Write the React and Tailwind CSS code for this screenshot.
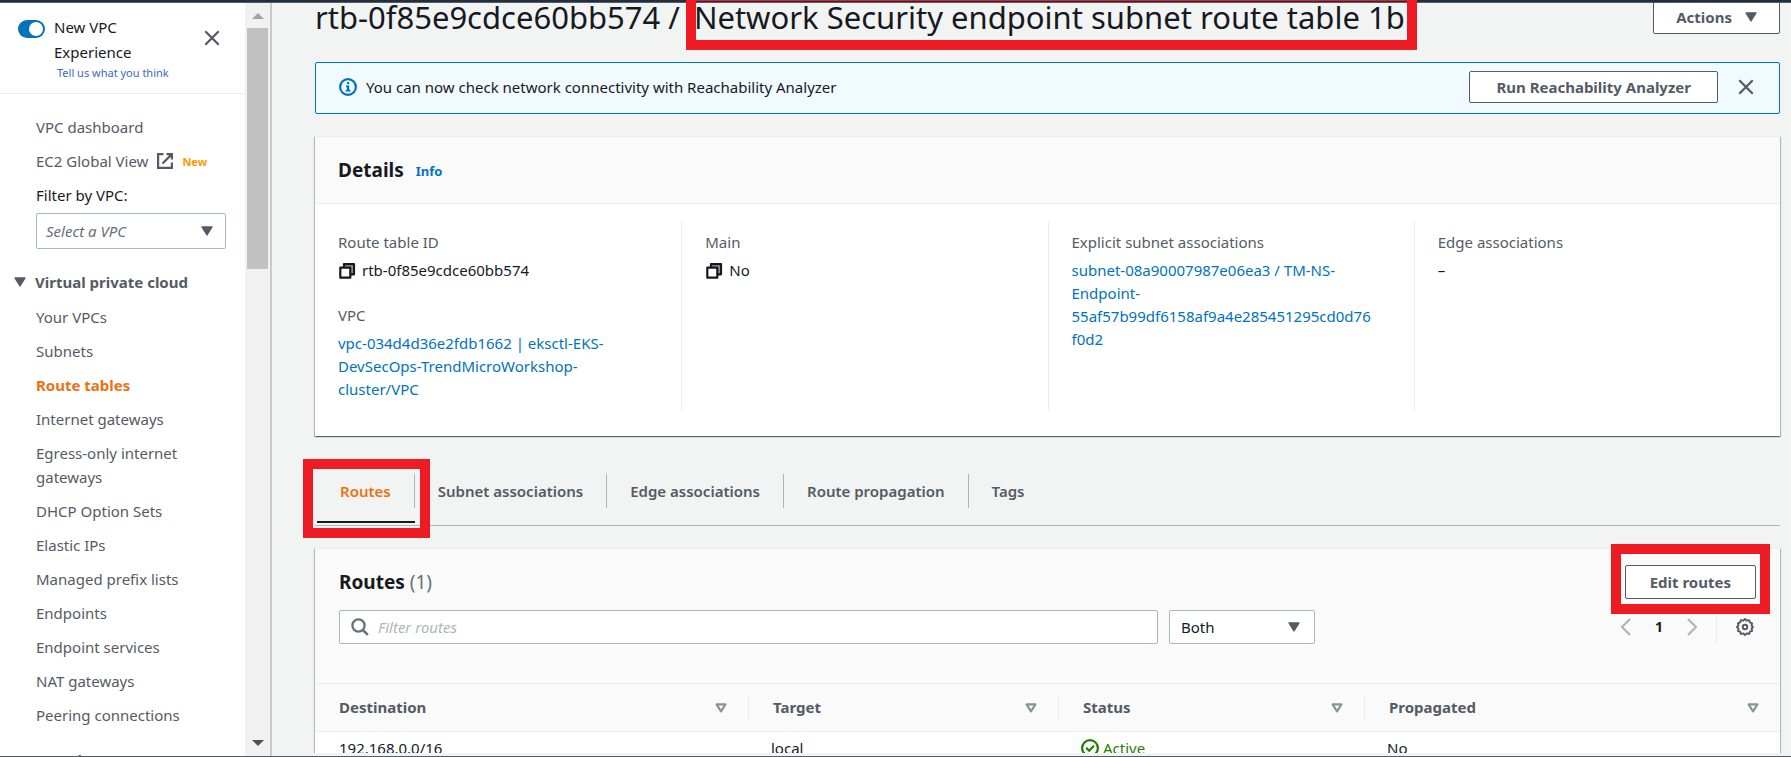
import React from "react";

const FONT = "font-['Noto_Sans','Open_Sans',sans-serif]";

function CaretDown({ className = "" }) {
  return (
    <svg viewBox="0 0 12 10" className={`h-[10px] w-3 shrink-0 ${className}`} aria-hidden="true">
      <path d="M1 1h10L6 9z" fill="#545b64" stroke="#545b64" strokeWidth="1.4" strokeLinejoin="round" />
    </svg>
  );
}

function SortIcon() {
  return (
    <svg viewBox="0 0 12 10" className="h-[10px] w-3 shrink-0" aria-hidden="true">
      <path d="M1.6 1.4h8.8L6 8.4z" fill="none" stroke="#879596" strokeWidth="2.2" strokeLinejoin="round" />
    </svg>
  );
}

function CloseIcon() {
  return (
    <svg viewBox="0 0 16 16" className="size-4" aria-hidden="true">
      <path d="M1.3 1.3l13.4 13.4M14.7 1.3L1.3 14.7" stroke="#545b64" strokeWidth="2.3" fill="none" />
    </svg>
  );
}

function ExternalIcon() {
  return (
    <svg viewBox="0 0 16 16" className="size-4 shrink-0" aria-hidden="true">
      <g fill="none" stroke="#545b64" strokeWidth="2.2">
        <path d="M6.5 1.1H1.1v13.8h13.8V9.5" />
        <path d="M9.5 1.1h5.4v5.4" />
        <path d="M14.9 1.1L5.5 10.5" />
      </g>
    </svg>
  );
}

function CopyIcon() {
  return (
    <svg viewBox="0 0 18 18" className="size-[18px] shrink-0" aria-hidden="true">
      <path d="M6 2h10v10h-3.500V5.500H6z" fill="#9a9ca0" />
      <g fill="none" stroke="#16191f" strokeWidth="2.2" strokeLinejoin="round">
        <path d="M2.3 5.7h10v10h-10z" fill="#fff" />
        <path d="M6 5.5V2.100h10v10.200h-3.400" />
      </g>
    </svg>
  );
}

function InfoIcon() {
  return (
    <svg viewBox="0 0 18 18" className="size-[18px] shrink-0" aria-hidden="true">
      <circle cx="9" cy="9" r="7.9" fill="none" stroke="#0073bb" strokeWidth="2.2" />
      <path d="M8 4h2.2v2.2H8zM7 7.5h3.2v4.3h1.3v1.7H6.6v-1.7H8V9.2H7z" fill="#0073bb" />
    </svg>
  );
}

function SearchIcon() {
  return (
    <svg viewBox="0 0 18 18" className="size-[18px] shrink-0" aria-hidden="true">
      <circle cx="7.5" cy="7.5" r="6.1" fill="none" stroke="#687078" strokeWidth="2.3" />
      <path d="M11.8 11.8L16.8 16.8" stroke="#687078" strokeWidth="2.6" />
    </svg>
  );
}

function GearIcon() {
  return (
    <svg viewBox="0 0 18 18" className="size-[18px]" aria-hidden="true">
      <path
        d="M9 1l1.700 1.700 2.400-.6 .8 2.300 2.200 .9-.6 2.200L17 9l-1.500 1.600 .6 2.200-2.200 .9-.8 2.300-2.400-.6L9 17l-1.700-1.600-2.400 .6-.8-2.300-2.200-.9 .6-2.200L1 9l1.500-1.500-.6-2.200 2.200-.9 .8-2.300 2.400 .6z"
        fill="none"
        stroke="#545b64"
        strokeWidth="1.9"
        strokeLinejoin="round"
      />
      <circle cx="9" cy="9" r="2.2" fill="none" stroke="#545b64" strokeWidth="2" />
    </svg>
  );
}

function CheckCircleIcon() {
  return (
    <svg viewBox="0 0 18 18" className="size-[18px] shrink-0" aria-hidden="true">
      <circle cx="9" cy="9" r="7.9" fill="none" stroke="#1d8102" strokeWidth="2.2" />
      <path d="M5.2 8.8l2.9 2.9 4.9-5" fill="none" stroke="#1d8102" strokeWidth="2.2" />
    </svg>
  );
}

function Chevron({ flip }) {
  return (
    <svg viewBox="0 0 10 18" className="h-[18px] w-[10px]" aria-hidden="true">
      <path d={flip ? "M1 1l8 8-8 8" : "M9 1L1 9l8 8"} fill="none" stroke="#aab7b8" strokeWidth="2.2" />
    </svg>
  );
}

const navItems = [
  "Your VPCs",
  "Subnets",
  "Route tables",
  "Internet gateways",
  "Egress-only internet gateways",
  "DHCP Option Sets",
  "Elastic IPs",
  "Managed prefix lists",
  "Endpoints",
  "Endpoint services",
  "NAT gateways",
  "Peering connections",
];

function Sidebar() {
  return (
    <aside className="flex w-[272px] shrink-0 overflow-hidden border-r-2 border-[#c6cccc] bg-white">
      <div className="min-w-0 flex-1">
        <div className="flex h-[91px] items-start border-b border-[#eaeded] pl-[18px] pr-[25px] pt-3">
          <button role="switch" aria-checked="true" aria-label="New VPC Experience" className="mt-[5px] flex h-[18px] w-[27px] shrink-0 justify-end rounded-full bg-[#0073bb] p-[2px]">
            <span className="size-[14px] rounded-full bg-white" />
          </button>
          <div className="ml-[9px] flex-1 text-[#16191f]">
            <p className="w-24 leading-[25px]">New VPC Experience</p>
            <a href="#feedback" className="block whitespace-nowrap pl-[3px] text-[11px] leading-4 text-[#3f66c4]">Tell us what you think</a>
          </div>
          <button aria-label="Close navigation" className="mt-[15px]">
            <CloseIcon />
          </button>
        </div>
        <nav className="text-[#545b64]">
          <div className="flex flex-col gap-[10px] px-9 pt-[21px] leading-6">
            <a href="#dashboard">VPC dashboard</a>
            <a href="#global" className="flex items-center gap-[9px] whitespace-nowrap">
              EC2 Global View
              <ExternalIcon />
              <span className="pt-[2px] text-[11px] font-bold leading-4 text-[#ff9900]">New</span>
            </a>
            <label htmlFor="vpc" className="text-[#16191f]">Filter by VPC:</label>
          </div>
          <div className="ml-9 mr-[19px] mt-[6px] grid items-center">
            <select id="vpc" className="h-9 w-full appearance-none rounded-xs border border-[#aab7b8] bg-white pl-[9px] italic text-[#687078] [grid-area:1/1]">
              <option>Select a VPC</option>
            </select>
            <CaretDown className="pointer-events-none mr-[13px] justify-self-end [grid-area:1/1]" />
          </div>
          <button className="mt-[21px] flex items-center gap-[9px] pl-[14px] font-bold leading-6">
            <CaretDown />
            Virtual private cloud
          </button>
          <ul className="mt-[11px] flex flex-col gap-[10px] px-9 leading-6">
            {navItems.map((item) => (
              <li key={item}>
                <a href="#nav" className={item === "Route tables" ? "font-bold text-[#ec7211]" : ""}>{item}</a>
              </li>
            ))}
          </ul>
          <p className="mt-[21px] pl-9 font-bold leading-6">Security</p>
        </nav>
      </div>
      <div className="flex w-[25px] shrink-0 flex-col items-center bg-[#f1f1f1]">
        <div className="flex h-[25px] items-center">
          <svg viewBox="0 0 12 6" className="h-[6px] w-3" aria-hidden="true"><path d="M0 6L6 0l6 6z" fill="#a3a3a3" /></svg>
        </div>
        <div className="h-[241px] w-[21px] bg-[#c1c1c1]" />
        <div className="flex flex-1 items-end pb-[10px]">
          <svg viewBox="0 0 12 6" className="h-[6px] w-3" aria-hidden="true"><path d="M0 0h12L6 6z" fill="#505050" /></svg>
        </div>
      </div>
    </aside>
  );
}

function Field({ label, children }) {
  return (
    <div>
      <dt className="text-[#545b64]">{label}</dt>
      <dd className="mt-[5px] text-[#16191f]">{children}</dd>
    </div>
  );
}

const cardShadow = "border-t border-[#eaeded] shadow-[0_1px_1px_#00000055,1px_1px_1px_#00000033,-1px_1px_1px_#00000033]";
const btn = "rounded-xs border border-[#545b64] bg-white font-bold text-[#545b64]";
const marker = "pointer-events-none absolute z-20 border-[10px] border-[#ed1c24]";
const cell = "border-l border-[#eaeded] pl-[23px] pr-10 pt-[10px]";

function Tab({ label, active, last, children }) {
  return (
    <button role="tab" aria-selected={active ? "true" : "false"} className={`relative border-b-2 pb-[13px] ${active ? "border-[#16191f] text-[#ec7211]" : "border-transparent"}`}>
      <span className={`block px-[23px] leading-[34px] ${last ? "" : "border-r border-[#aab7b8]"}`}>{label}</span>
      {children}
    </button>
  );
}

const columns = ["Destination", "Target", "Status", "Propagated"];

export default function App() {
  return (
    <div className={`flex h-screen flex-col overflow-hidden border-b border-[#545b64] bg-[#f2f3f3] text-[15px] text-[#16191f] ${FONT}`}>
      <header className="relative z-10 h-[3px] shrink-0 border-b border-[#545b64] bg-[#232f3e]" />
      <div className="flex min-h-0 flex-1">
        <Sidebar />
        <main className="-mt-[3px] mb-[3px] min-w-0 flex-1 overflow-hidden pl-[43px] pr-[11px]">
          <div className="flex justify-between">
            <h1 className="whitespace-nowrap text-[31px] leading-[34px]">
              rtb-0f85e9cdce60bb574 /{" "}
              <span className="relative ml-[6px] inline-block">
                Network Security endpoint subnet route table 1b
                <span className={`${marker} -bottom-4 -left-2 -right-3 -top-[9px]`} />
              </span>
            </h1>
            <button className={`${btn} flex h-[34px] items-center gap-[13px] px-[22px]`}>
              Actions
              <CaretDown />
            </button>
          </div>

          <section className="mt-7 flex h-[52px] items-center rounded-xs border border-[#0073bb] bg-[#f1faff] pb-[2px] pl-[23px] pr-[25px]">
            <InfoIcon />
            <p className="ml-[9px] flex-1">You can now check network connectivity with Reachability Analyzer</p>
            <button className={`${btn} h-8 px-[26px]`}>Run Reachability Analyzer</button>
            <button aria-label="Dismiss" className="ml-5">
              <CloseIcon />
            </button>
          </section>

          <section className={`mt-[22px] bg-white ${cardShadow}`}>
            <div className="flex h-[67px] items-center gap-3 border-b border-[#eaeded] bg-[#fafafa] px-[23px]">
              <h2 className="text-[19px] font-bold">Details</h2>
              <a href="#info" className="pt-[3px] text-[13px] font-bold text-[#0073bb]">Info</a>
            </div>
            <dl className="grid grid-cols-4 pb-[25px] pt-[17px] leading-[23px]">
              <div className="flex min-h-[190px] flex-col gap-[22px] pl-[23px] pr-10 pt-[10px]">
                <Field label="Route table ID">
                  <span className="flex items-center gap-[6px]"><CopyIcon />rtb-0f85e9cdce60bb574</span>
                </Field>
                <Field label="VPC">
                  <a href="#vpc" className="text-[#0073bb]">vpc-034d4d36e2fdb1662 | eksctl-EKS-DevSecOps-TrendMicroWorkshop-cluster/VPC</a>
                </Field>
              </div>
              <div className={cell}>
                <Field label="Main">
                  <span className="flex items-center gap-[6px]"><CopyIcon />No</span>
                </Field>
              </div>
              <div className={cell}>
                <Field label="Explicit subnet associations">
                  <a href="#subnet" className="break-words text-[#0073bb]">subnet-08a90007987e06ea3 / TM-NS-Endpoint-55af57b99df6158af9a4e285451295cd0d76f0d2</a>
                </Field>
              </div>
              <div className={cell}>
                <Field label="Edge associations">–</Field>
              </div>
            </dl>
          </section>

          <div role="tablist" className="mt-[38px] flex border-b border-[#aab7b8] pb-[2px] pl-[2px] font-semibold text-[#545b64]">
            <Tab label="Routes" active>
              <span className={`${marker} -bottom-[17px] -left-[14px] -right-[15px] -top-[15px]`} />
            </Tab>
            <Tab label="Subnet associations" />
            <Tab label="Edge associations" />
            <Tab label="Route propagation" />
            <Tab label="Tags" last />
          </div>

          <section className={`mt-[22px] bg-white ${cardShadow}`}>
            <div className="bg-[#fafafa] px-6 pb-[39px] pt-4">
              <div className="flex items-center justify-between">
                <h2 className="text-[19px] font-bold">Routes <span className="font-normal text-[#687078]">(1)</span></h2>
                <div className="relative">
                  <button className={`${btn} h-[34px] px-6`}>Edit routes</button>
                  <span className={`${marker} -bottom-[15px] -left-[14px] -right-[14px] -top-[21px]`} />
                </div>
              </div>
              <div className="mt-[11px] flex items-center">
                <label className="flex h-[34px] flex-1 items-center gap-[9px] rounded-xs border border-[#aab7b8] bg-white px-[11px]">
                  <SearchIcon />
                  <input aria-label="Filter routes" placeholder="Filter routes" className="min-w-0 flex-1 outline-none placeholder:italic placeholder:text-[#aab7b8]" />
                </label>
                <div className="ml-[11px] grid w-[146px] items-center">
                  <select aria-label="Propagation filter" className="h-[34px] w-full appearance-none rounded-xs border border-[#aab7b8] bg-white pl-[11px] [grid-area:1/1]">
                    <option>Both</option>
                  </select>
                  <CaretDown className="pointer-events-none mr-[15px] justify-self-end [grid-area:1/1]" />
                </div>
                <div className="flex w-[441px] items-center justify-end">
                  <button aria-label="Previous page"><Chevron /></button>
                  <span className="mx-[23px] w-[10px] text-center text-sm font-bold">1</span>
                  <button aria-label="Next page"><Chevron flip /></button>
                  <span className="ml-[19px] h-[34px] border-l border-[#eaeded]" />
                  <button aria-label="Preferences" className="ml-[19px] mr-[2px]"><GearIcon /></button>
                </div>
              </div>
            </div>
            <table className="w-full table-fixed border-collapse text-left">
              <colgroup>
                <col className="w-[434px]" />
                <col className="w-[310px]" />
                <col className="w-[306px]" />
                <col />
              </colgroup>
              <thead>
                <tr className="border-y border-[#eaeded] bg-[#fafafa]">
                  {columns.map((name, i) => (
                    <th key={name} scope="col" className="h-12 p-0 font-bold text-[#545b64]">
                      <div className={`flex h-6 items-center justify-between pl-6 pr-[21px] ${i < 3 ? "border-r border-[#eaeded]" : ""}`}>
                        {name}
                        <SortIcon />
                      </div>
                    </th>
                  ))}
                </tr>
              </thead>
              <tbody>
                <tr className="leading-6">
                  <td className="px-6 pt-1">192.168.0.0/16</td>
                  <td className="px-[22px] pt-1">local</td>
                  <td className="px-[22px] pt-1">
                    <span className="flex items-center gap-1 text-[#1d8102]"><CheckCircleIcon />Active</span>
                  </td>
                  <td className="px-[22px] pt-1">No</td>
                </tr>
              </tbody>
            </table>
          </section>
        </main>
      </div>
    </div>
  );
}
